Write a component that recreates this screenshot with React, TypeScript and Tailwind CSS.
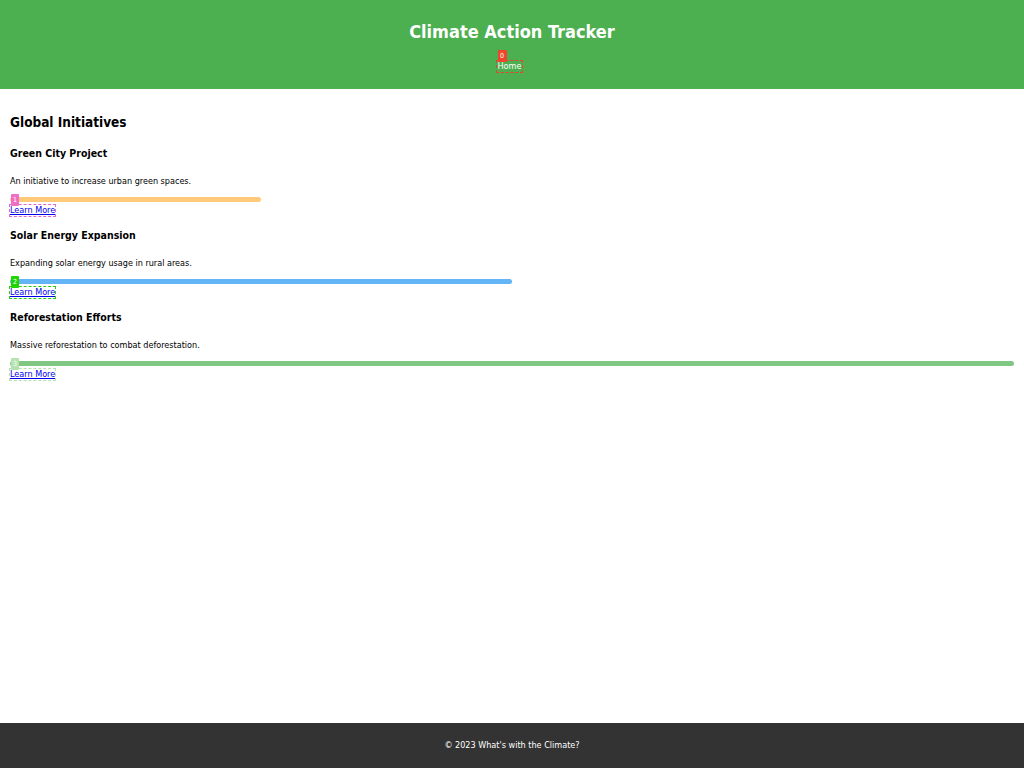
import React from 'react';

const font = { fontFamily: '"DejaVu Sans Condensed", "DejaVu Sans", Verdana, sans-serif' };

interface Initiative {
  title: string;
  text: string;
  progress: number;
  barColor: string;
  badge: string;
  outline: string;
}

const initiatives: Initiative[] = [
  {
    title: 'Green City Project',
    text: 'An initiative to increase urban green spaces.',
    progress: 25,
    barColor: 'bg-[#ffc97a]',
    badge: 'bg-[#ee6fc4]',
    outline: 'outline-[#e26ad0]',
  },
  {
    title: 'Solar Energy Expansion',
    text: 'Expanding solar energy usage in rural areas.',
    progress: 50,
    barColor: 'bg-[#64b5f6]',
    badge: 'bg-[#1fd400]',
    outline: 'outline-[#2bcf12]',
  },
  {
    title: 'Reforestation Efforts',
    text: 'Massive reforestation to combat deforestation.',
    progress: 100,
    barColor: 'bg-[#81c784]',
    badge: 'bg-[#b5e3b0]',
    outline: 'outline-[#b9e2b4]',
  },
];

export default function App() {
  return (
    <div className="min-h-[768px] flex flex-col bg-white text-black font-stretch-condensed" style={font}>
      {/* Header */}
      <header className="bg-[#4caf50] text-white h-[89px] flex flex-col items-center pt-[21px]">
        <h1 className="text-[18px] font-bold leading-[22px]">Climate Action Tracker</h1>
        <nav className="mt-[18px] mr-[5px]">
          <a href="#" className="relative text-[9px] leading-[11px] px-[1px] block outline-1 outline-dashed outline-[#e8452c] text-white">
            <span className="absolute left-[1px] -top-[11px] bg-[#f0442b] text-white text-[7px] leading-[12px] w-[9px] text-center rounded-[1px]">0</span>
            Home
          </a>
        </nav>
      </header>

      {/* Main */}
      <main className="flex-1 px-[10px] pt-[25px]">
        <h2 className="text-[13.5px] font-bold leading-[16px]">Global Initiatives</h2>
        {initiatives.map((item, i) => (
          <section key={item.title} className={i === 0 ? 'mt-[17px]' : 'mt-[13px]'}>
            <h3 className="text-[10.5px] font-bold leading-[13px]">{item.title}</h3>
            <p className="text-[9px] leading-[11px] mt-[16px]">{item.text}</p>
            <div className="mt-[10px] h-[5px] w-full">
              <div className={`h-[5px] rounded-full ${item.barColor}`} style={{ width: `${item.progress}%` }} />
            </div>
            <div className="mt-[3px] flex">
              <a href="#" className={`relative block text-[9px] leading-[11px] text-[#0000ee] underline outline-1 outline-dashed ${item.outline}`}>
                <span className={`absolute left-[1px] -top-[11px] ${item.badge} text-white text-[7px] leading-[12px] w-[8px] text-center rounded-[1px] no-underline`}>
                  {i + 1}
                </span>
                Learn More
              </a>
            </div>
          </section>
        ))}
      </main>

      {/* Footer */}
      <footer className="bg-[#333333] text-white h-[45px] flex items-center justify-center text-[9px]">
        © 2023 What's with the Climate?
      </footer>
    </div>
  );
}
